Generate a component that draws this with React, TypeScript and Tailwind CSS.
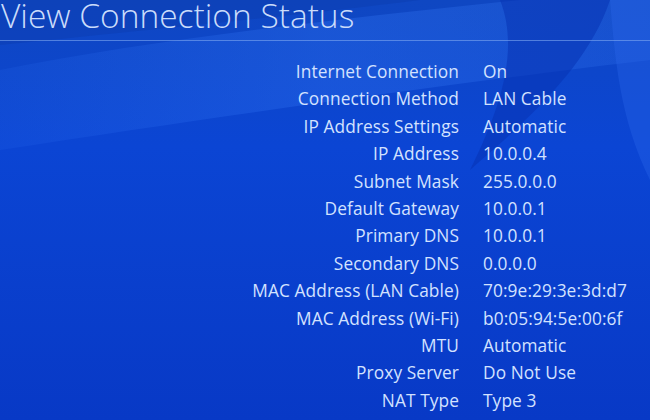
import React from 'react';

const rows: [string, string][] = [
  ['Internet Connection', 'On'],
  ['Connection Method', 'LAN Cable'],
  ['IP Address Settings', 'Automatic'],
  ['IP Address', '10.0.0.4'],
  ['Subnet Mask', '255.0.0.0'],
  ['Default Gateway', '10.0.0.1'],
  ['Primary DNS', '10.0.0.1'],
  ['Secondary DNS', '0.0.0.0'],
  ['MAC Address (LAN Cable)', '70:9e:29:3e:3d:d7'],
  ['MAC Address (Wi-Fi)', 'b0:05:94:5e:00:6f'],
  ['MTU', 'Automatic'],
  ['Proxy Server', 'Do Not Use'],
  ['NAT Type', 'Type 3'],
];

const Backdrop = () => (
  <svg className="absolute inset-0 w-full h-full" viewBox="0 0 650 420" preserveAspectRatio="none">
    <defs>
      <linearGradient id="base" x1="0" y1="0" x2="0" y2="1">
        <stop offset="0" stopColor="#0f47c2" />
        <stop offset="0.35" stopColor="#0b45d4" />
        <stop offset="1" stopColor="#0839c6" />
      </linearGradient>
      <linearGradient id="band" x1="0" y1="0" x2="1" y2="0">
        <stop offset="0" stopColor="#2a6cf0" stopOpacity="0.15" />
        <stop offset="0.5" stopColor="#2f72f2" stopOpacity="0.35" />
        <stop offset="1" stopColor="#3a7cf5" stopOpacity="0.2" />
      </linearGradient>
    </defs>
    <rect width="650" height="420" fill="url(#base)" />
    <path d="M0 70 C150 40 330 20 520 0 L650 0 L650 60 C480 80 260 110 0 150 Z" fill="url(#band)" />
    <path d="M500 0 L610 0 C590 60 540 110 470 170 C500 110 520 50 500 0 Z" fill="#0733b4" opacity="0.55" />
    <path d="M610 0 L650 0 L650 180 C620 120 615 60 610 0 Z" fill="#2a68ea" opacity="0.35" />
    <path d="M0 0 L420 0 C300 15 150 30 0 45 Z" fill="#0b3aa8" opacity="0.35" />
  </svg>
);

export default function App() {
  return (
    <div
      className="relative w-[650px] h-[420px] overflow-hidden text-[#d3e2ff]"
      style={{ fontFamily: '"Open Sans", "Liberation Sans", sans-serif' }}
    >
      <Backdrop />
      <div className="relative flex flex-col">
        <h1 className="h-[40px] pl-[1px] text-[33.5px] font-light leading-[30px] text-[#cadcfa] whitespace-nowrap">
          View Connection Status
        </h1>
        <div className="h-px bg-[#7fa8f0]/60" />
        <div className="mt-[17px] grid grid-cols-[459px_1fr] gap-x-6 text-[17.3px] leading-[27.4px] tracking-[0.1px]">
          {rows.map(([label, value]) => (
            <React.Fragment key={label}>
              <div className="text-right whitespace-nowrap">{label}</div>
              <div className="whitespace-nowrap">{value}</div>
            </React.Fragment>
          ))}
        </div>
      </div>
    </div>
  );
}
